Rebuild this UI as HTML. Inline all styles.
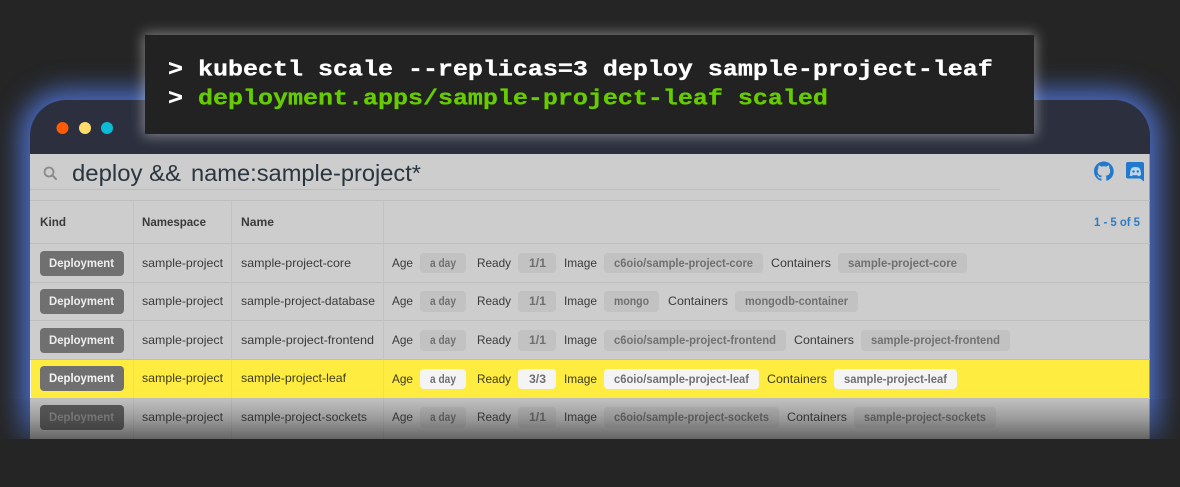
<!DOCTYPE html>
<html><head><meta charset="utf-8">
<style>
html,body{margin:0;padding:0;width:1180px;height:487px;overflow:hidden;background:#252525}
.a{position:absolute}
svg text{font-family:"Liberation Sans",sans-serif;font-size:12px;fill:#3a3a3a}
svg .p{fill:#c2c2c2}
svg .t{fill:#707070;font-weight:bold;font-size:11.5px}
svg .y .p{fill:#f4f4f4}
svg .y text{fill:#3a3a20}
svg .y .t{fill:#707070}
svg .b{fill:#707070}
svg .bt{fill:#eeeeee;font-weight:bold;font-size:11.5px}
svg .h{font-weight:bold;fill:#3a3a3a}
svg .m{font-family:"Liberation Mono",monospace;font-weight:bold;font-size:25px;fill:#fff;stroke:#fff;stroke-width:.35px}
svg .g{fill:#66cc00;stroke:#66cc00}
</style></head>
<body>
<div class="a" style="left:30px;top:100px;width:1120px;height:339px;border-radius:36px 36px 0 0;background:#2c303e;box-shadow:0 0 26px 10px #4a6cc4"></div>
<div class="a" style="left:30px;top:154px;width:1120px;height:285px;background:#cdcdcd"></div>
<svg class="a" style="left:0;top:0;filter:blur(.3px)" width="1180" height="487" viewBox="0 0 1180 487">
  <rect x="30" y="360" width="1120" height="39" fill="#ffec40"/>
  <rect x="30" y="360" width="1" height="38" fill="#f5f5f5"/>
  <rect x="1149" y="154" width="1" height="285" fill="#9a9a9a"/>
  <g fill="#bdbdbd">
    <rect x="30" y="189" width="970" height="1"/>
    <rect x="30" y="200" width="1120" height="1"/>
    <rect x="30" y="243" width="1120" height="1"/>
    <rect x="30" y="282" width="1120" height="1"/>
    <rect x="30" y="320" width="1120" height="1"/>
    <rect x="30" y="359" width="1120" height="1"/>
    <rect x="30" y="398" width="1120" height="1"/>
  </g>
  <g fill="#c2c2c2">
    <rect x="133" y="201" width="1" height="159"/>
    <rect x="231" y="201" width="1" height="159"/>
    <rect x="383" y="201" width="1" height="159"/>
    <rect x="133" y="399" width="1" height="40"/>
    <rect x="231" y="399" width="1" height="40"/>
    <rect x="383" y="399" width="1" height="40"/>
  </g>
  <g fill="#f5e23c">
    <rect x="133" y="360" width="1" height="38"/>
    <rect x="231" y="360" width="1" height="38"/>
    <rect x="383" y="360" width="1" height="38"/>
  </g>

  <circle cx="62.500" cy="128" r="6" fill="#ff5a05"/>
  <circle cx="85" cy="128" r="6" fill="#fddc6c"/>
  <circle cx="107" cy="128" r="6" fill="#0bbcd4"/>

  <circle cx="49" cy="172" r="4.500" fill="none" stroke="#8a8a8a" stroke-width="1.800"/>
  <path d="M52.300 175.300L56 179" stroke="#8a8a8a" stroke-width="2" stroke-linecap="round"/>
  <text x="72" y="181" textLength="109" lengthAdjust="spacingAndGlyphs" style="font-size:23px;fill:#2b3540">deploy &amp;&amp;</text>
  <text x="191" y="181" textLength="230" lengthAdjust="spacingAndGlyphs" style="font-size:23px;fill:#2b3540">name:sample-project*</text>

  <g transform="translate(1094,161.500) scale(1.23)" fill="#2179cb"><path d="M8 0C3.58 0 0 3.58 0 8c0 3.54 2.29 6.53 5.47 7.59.4.07.55-.17.55-.38 0-.19-.01-.82-.01-1.49-2.01.37-2.53-.49-2.69-.94-.09-.23-.48-.94-.82-1.13-.28-.15-.68-.52-.01-.53.63-.01 1.08.58 1.23.82.72 1.21 1.87.87 2.33.66.07-.52.28-.87.51-1.07-1.78-.2-3.64-.89-3.64-3.95 0-.87.31-1.59.82-2.15-.08-.2-.36-1.02.08-2.12 0 0 .67-.21 2.2.82.64-.18 1.32-.27 2-.27.68 0 1.36.09 2 .27 1.53-1.04 2.2-.82 2.2-.82.44 1.1.16 1.92.08 2.12.51.56.82 1.27.82 2.15 0 3.07-1.87 3.75-3.65 3.95.29.25.54.73.54 1.48 0 1.07-.01 1.93-.01 2.2 0 .21.15.46.55.38A8.013 8.013 0 0016 8c0-4.42-3.58-8-8-8z"/></g>
  <path d="M1128 162h14a2 2 0 0 1 2 2v17.500l-4-3h-12a2 2 0 0 1-2-2v-12.500a2 2 0 0 1 2-2z" fill="#2179cb"/>
  <path d="M1130 175c0-3.500.7-6 2-7.200 2.500-1 4.500-1 7 0 1.300 1.200 2 3.700 2 7.200-1 .8-2 1.200-3 1.200l-.8-1.200c-1.700.4-2.700.4-4.400 0l-.8 1.200c-1 0-2-.4-3-1.200z" fill="#bcd5ee"/>
  <circle cx="1133.500" cy="171.500" r="1.200" fill="#2179cb"/><circle cx="1137.800" cy="171.500" r="1.200" fill="#2179cb"/>

  <text class="h" x="40" y="226" textLength="26" lengthAdjust="spacingAndGlyphs">Kind</text>
  <text class="h" x="142" y="226" textLength="64" lengthAdjust="spacingAndGlyphs">Namespace</text>
  <text class="h" x="241" y="226" textLength="33" lengthAdjust="spacingAndGlyphs">Name</text>
  <text x="1094" y="226" textLength="46" lengthAdjust="spacingAndGlyphs" style="fill:#2a7cc7;font-weight:bold">1 - 5 of 5</text>

  <!-- row 1 -->
  <g>
    <rect class="b" x="40" y="251" width="84" height="25" rx="4"/>
    <text class="bt" x="49" y="267" textLength="65" lengthAdjust="spacingAndGlyphs">Deployment</text>
    <text x="142" y="267" textLength="81" lengthAdjust="spacingAndGlyphs">sample-project</text>
    <text x="241" y="267" textLength="110" lengthAdjust="spacingAndGlyphs">sample-project-core</text>
    <text x="392" y="267" textLength="21" lengthAdjust="spacingAndGlyphs">Age</text>
    <rect class="p" x="420" y="253" width="46" height="20" rx="4"/>
    <text class="t" x="430" y="267" textLength="26" lengthAdjust="spacingAndGlyphs">a day</text>
    <text x="477" y="267" textLength="34" lengthAdjust="spacingAndGlyphs">Ready</text>
    <rect class="p" x="518" y="253" width="38" height="20" rx="4"/>
    <text class="t" x="529" y="267" textLength="17" lengthAdjust="spacingAndGlyphs">1/1</text>
    <text x="564" y="267" textLength="33" lengthAdjust="spacingAndGlyphs">Image</text>
    <rect class="p" x="604" y="253" width="159" height="20" rx="4"/>
    <text class="t" x="614" y="267" textLength="139" lengthAdjust="spacingAndGlyphs">c6oio/sample-project-core</text>
    <text x="771" y="267" textLength="60" lengthAdjust="spacingAndGlyphs">Containers</text>
    <rect class="p" x="838" y="253" width="129" height="20" rx="4"/>
    <text class="t" x="848" y="267" textLength="109" lengthAdjust="spacingAndGlyphs">sample-project-core</text>
  </g>
  <!-- row 2 -->
  <g>
    <rect class="b" x="40" y="289" width="84" height="25" rx="4"/>
    <text class="bt" x="49" y="305" textLength="65" lengthAdjust="spacingAndGlyphs">Deployment</text>
    <text x="142" y="305" textLength="81" lengthAdjust="spacingAndGlyphs">sample-project</text>
    <text x="241" y="305" textLength="134" lengthAdjust="spacingAndGlyphs">sample-project-database</text>
    <text x="392" y="305" textLength="21" lengthAdjust="spacingAndGlyphs">Age</text>
    <rect class="p" x="420" y="291" width="46" height="21" rx="4"/>
    <text class="t" x="430" y="305" textLength="26" lengthAdjust="spacingAndGlyphs">a day</text>
    <text x="477" y="305" textLength="34" lengthAdjust="spacingAndGlyphs">Ready</text>
    <rect class="p" x="518" y="291" width="38" height="21" rx="4"/>
    <text class="t" x="529" y="305" textLength="17" lengthAdjust="spacingAndGlyphs">1/1</text>
    <text x="564" y="305" textLength="33" lengthAdjust="spacingAndGlyphs">Image</text>
    <rect class="p" x="604" y="291" width="55" height="21" rx="4"/>
    <text class="t" x="614" y="305" textLength="35" lengthAdjust="spacingAndGlyphs">mongo</text>
    <text x="668" y="305" textLength="60" lengthAdjust="spacingAndGlyphs">Containers</text>
    <rect class="p" x="735" y="291" width="123" height="21" rx="4"/>
    <text class="t" x="745" y="305" textLength="103" lengthAdjust="spacingAndGlyphs">mongodb-container</text>
  </g>
  <!-- row 3 -->
  <g>
    <rect class="b" x="40" y="328" width="84" height="25" rx="4"/>
    <text class="bt" x="49" y="344" textLength="65" lengthAdjust="spacingAndGlyphs">Deployment</text>
    <text x="142" y="344" textLength="81" lengthAdjust="spacingAndGlyphs">sample-project</text>
    <text x="241" y="344" textLength="133" lengthAdjust="spacingAndGlyphs">sample-project-frontend</text>
    <text x="392" y="344" textLength="21" lengthAdjust="spacingAndGlyphs">Age</text>
    <rect class="p" x="420" y="330" width="46" height="21" rx="4"/>
    <text class="t" x="430" y="344" textLength="26" lengthAdjust="spacingAndGlyphs">a day</text>
    <text x="477" y="344" textLength="34" lengthAdjust="spacingAndGlyphs">Ready</text>
    <rect class="p" x="518" y="330" width="38" height="21" rx="4"/>
    <text class="t" x="529" y="344" textLength="17" lengthAdjust="spacingAndGlyphs">1/1</text>
    <text x="564" y="344" textLength="33" lengthAdjust="spacingAndGlyphs">Image</text>
    <rect class="p" x="604" y="330" width="182" height="21" rx="4"/>
    <text class="t" x="614" y="344" textLength="162" lengthAdjust="spacingAndGlyphs">c6oio/sample-project-frontend</text>
    <text x="794" y="344" textLength="60" lengthAdjust="spacingAndGlyphs">Containers</text>
    <rect class="p" x="861" y="330" width="149" height="21" rx="4"/>
    <text class="t" x="871" y="344" textLength="129" lengthAdjust="spacingAndGlyphs">sample-project-frontend</text>
  </g>
  <!-- row 4 -->
  <g class="y">
    <rect class="b" x="40" y="366" width="84" height="25" rx="4"/>
    <text class="bt" x="49" y="382" textLength="65" lengthAdjust="spacingAndGlyphs" style="fill:#f6f6f6">Deployment</text>
    <text x="142" y="382" textLength="81" lengthAdjust="spacingAndGlyphs">sample-project</text>
    <text x="241" y="382" textLength="105" lengthAdjust="spacingAndGlyphs">sample-project-leaf</text>
    <text x="392" y="383" textLength="21" lengthAdjust="spacingAndGlyphs">Age</text>
    <rect class="p" x="420" y="369" width="46" height="20" rx="4"/>
    <text class="t" x="430" y="383" textLength="26" lengthAdjust="spacingAndGlyphs">a day</text>
    <text x="477" y="383" textLength="34" lengthAdjust="spacingAndGlyphs">Ready</text>
    <rect class="p" x="518" y="369" width="38" height="20" rx="4"/>
    <text class="t" x="529" y="383" textLength="17" lengthAdjust="spacingAndGlyphs">3/3</text>
    <text x="564" y="383" textLength="33" lengthAdjust="spacingAndGlyphs">Image</text>
    <rect class="p" x="604" y="369" width="155" height="20" rx="4"/>
    <text class="t" x="614" y="383" textLength="135" lengthAdjust="spacingAndGlyphs">c6oio/sample-project-leaf</text>
    <text x="767" y="383" textLength="60" lengthAdjust="spacingAndGlyphs">Containers</text>
    <rect class="p" x="834" y="369" width="123" height="20" rx="4"/>
    <text class="t" x="844" y="383" textLength="103" lengthAdjust="spacingAndGlyphs">sample-project-leaf</text>
  </g>
  <!-- row 5 -->
  <g>
    <rect x="40" y="405" width="84" height="25" rx="4" fill="#5e5e5e"/>
    <text class="bt" x="49" y="421" textLength="65" lengthAdjust="spacingAndGlyphs" style="fill:#949494">Deployment</text>
    <text x="142" y="421" textLength="81" lengthAdjust="spacingAndGlyphs">sample-project</text>
    <text x="241" y="421" textLength="126" lengthAdjust="spacingAndGlyphs">sample-project-sockets</text>
    <text x="392" y="421" textLength="21" lengthAdjust="spacingAndGlyphs">Age</text>
    <rect class="p" x="420" y="407" width="46" height="21" rx="4"/>
    <text class="t" x="430" y="421" textLength="26" lengthAdjust="spacingAndGlyphs">a day</text>
    <text x="477" y="421" textLength="34" lengthAdjust="spacingAndGlyphs">Ready</text>
    <rect class="p" x="518" y="407" width="38" height="21" rx="4"/>
    <text class="t" x="529" y="421" textLength="17" lengthAdjust="spacingAndGlyphs">1/1</text>
    <text x="564" y="421" textLength="33" lengthAdjust="spacingAndGlyphs">Image</text>
    <rect class="p" x="604" y="407" width="175" height="21" rx="4"/>
    <text class="t" x="614" y="421" textLength="155" lengthAdjust="spacingAndGlyphs">c6oio/sample-project-sockets</text>
    <text x="787" y="421" textLength="60" lengthAdjust="spacingAndGlyphs">Containers</text>
    <rect class="p" x="854" y="407" width="142" height="21" rx="4"/>
    <text class="t" x="864" y="421" textLength="122" lengthAdjust="spacingAndGlyphs">sample-project-sockets</text>
  </g>
</svg>
<div class="a" style="left:0;top:399px;width:1180px;height:40px;background:linear-gradient(to bottom,rgba(37,37,37,.07),rgba(37,37,37,.3) 50%,rgba(37,37,37,.62))"></div>
<div class="a" style="left:0;top:439px;width:1180px;height:48px;background:#252525"></div>
<div class="a" style="left:145px;top:35px;width:889px;height:99px;background:#222;box-shadow:0 0 12px 2px rgba(255,255,255,.4)"></div>
<svg class="a" style="left:0;top:0;filter:blur(.2px)" width="1180" height="140" viewBox="0 0 1180 140">
  <text class="m" transform="translate(168,75.500) scale(1,.87)" xml:space="preserve">&gt; kubectl scale --replicas=3 deploy sample-project-leaf</text>
  <text class="m" transform="translate(168,104.500) scale(1,.87)">&gt;</text>
  <text class="m g" transform="translate(198,104.500) scale(1,.87)">deployment.apps/sample-project-leaf scaled</text>
</svg>
</body></html>
